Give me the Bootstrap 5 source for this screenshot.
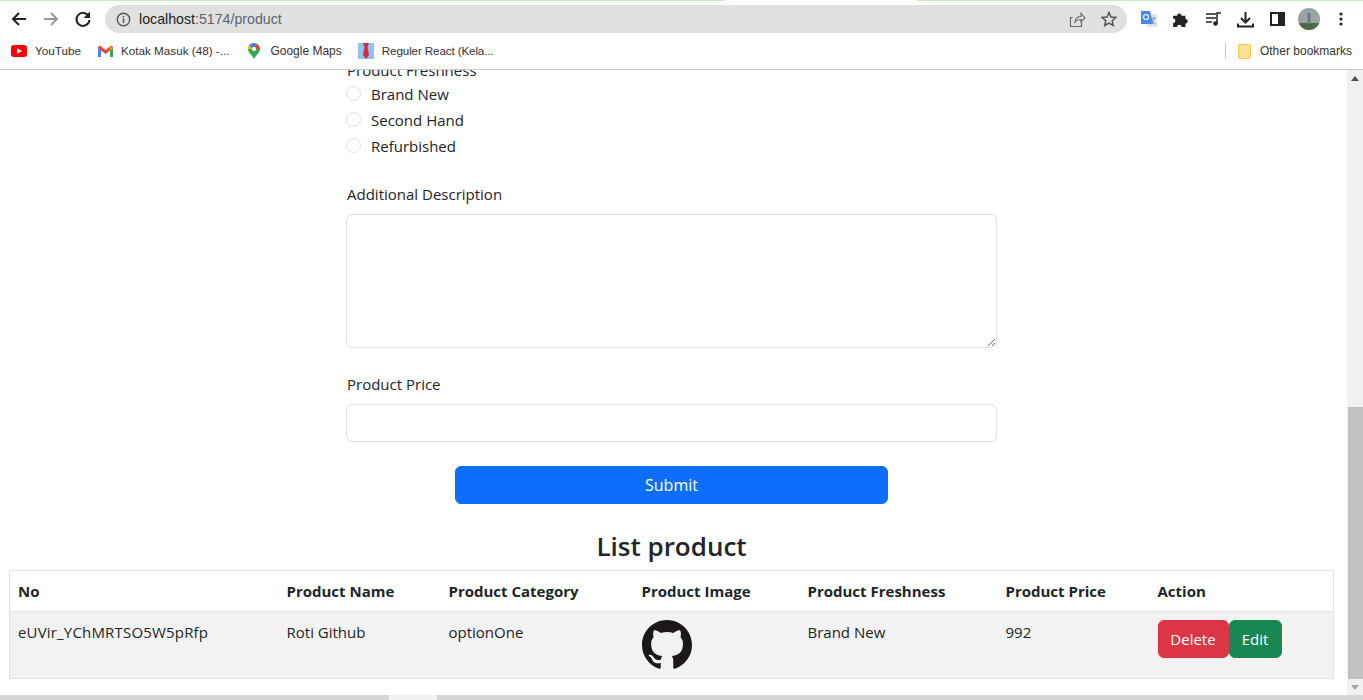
<!DOCTYPE html>
<html lang="en">
<head>
  <meta charset="UTF-8">
  <title>Product</title>
  <link href="https://cdn.jsdelivr.net/npm/bootstrap@5.3.3/dist/css/bootstrap.min.css" rel="stylesheet">
  <style>
    html, body {
      height: 700px;
      overflow: hidden;
    }
    body {
      font-family: "Open Sans", "Noto Sans", sans-serif;
      font-size: 15px;
      line-height: 24px;
      color: #212529;
    }
    /* browser chrome */
    .load-strip { height: 5px; }
    .load-strip div { height: 1px; background: #c8eec0; }
    .load-left { width: 725px; }
    .load-gap { width: 193px; background: #fff !important; }
    .chrome-bar {
      height: 28px;
      padding-left: 10px;
    }
    .nav-ico { width: 18px; height: 18px; }
    .back-ico { margin-right: 14px; }
    .fwd-ico { margin-right: 14px; }
    .url-box {
      width: 1022px;
      height: 28px;
      margin-left: 13px;
      background: #e0e0e0;
      border-radius: 14px;
      padding: 0 10px 0 11px;
      color: #5f6368;
      font-family: "Liberation Sans", sans-serif;
      font-size: 14.2px;
    }
    .url-host { color: #222; }
    .url-text { margin-left: 8px; }
    .share-ico { margin-right: 15px; }
    .ext-icons { margin-left: 6px; }
    .ext-slot { width: 32px; }
    .book-bar {
      height: 37px;
      padding: 0 11px 0 11px;
      border-bottom: 1px solid #c9c9c9;
      font-family: "Liberation Sans", sans-serif;
      font-size: 11.7px;
      color: #333;
    }
    .book-item { gap: 8px; margin-right: 17px; }
    .book-maps { gap: 9px; margin-left: 1px; margin-right: 16px; font-size: 12px; }
    .book-last { margin-right: 0; }
    .book-tight { letter-spacing: -.15px; }
    .book-other { gap: 9px; font-size: 12px; margin-right: 0; }
    .book-sep { width: 1px; height: 16px; background: #c4c4c4; margin-right: 12px; }

    /* page */
    .page-area { height: 625px; }
    .page-main {
      width: 1347px;
      padding: 0 13px 0 9px;
      overflow: hidden;
    }
    .form-wrap { width: 651px; margin: -12px auto 0; }
    .form-wrap .form-label, .form-wrap .form-check-label { padding-left: 1px; }
    .form-wrap .form-check { margin-bottom: 2px; padding-left: 24px; min-height: 24px; }
    .form-wrap .form-check-input { margin-left: -24px; margin-top: 4px; }
    .form-control { border-color: #dee2e6; height: 38px; }
    textarea.form-control { height: 134px; }
    .gap-desc { margin-top: 24px; }
    .gap-price { margin-top: 24px; }
    .btn-submit { width: 433px; margin: 24px auto 0; display: block; }
    .list-title {
      font-size: 26px;
      font-weight: 600;
      text-align: center;
      margin: 26px 0 7px;
      line-height: 33px;
    }
    .prod-table { margin-bottom: 0; font-size: 15px; table-layout: fixed; }
    .prod-table th { font-weight: 700; height: 41px; }
    .prod-table td { height: 66px; }
    .prod-table .id-cell { letter-spacing: .18px; }
    .w-no { width: 269px; }
    .w-name { width: 162px; }
    .w-cat { width: 193px; }
    .w-img { width: 166px; }
    .w-fresh { width: 198px; }
    .w-price { width: 152px; }
    .git-img { width: 50px; height: 50px; display: block; }
    .act-btn { font-size: 15px; border-radius: 6px; height: 38px; }
    .act-btn-del { width: 71px; padding: 0; }
    .act-btn-edit { width: 53px; padding: 0; }

    /* scrollbars */
    .vbar { width: 16px; background: #f1f1f1; }
    .vbar-arrow { height: 17px; }
    .vbar-arrow-low { height: 16px; }
    .vbar-space { height: 320px; }
    .vbar-thumb { width: 15px; margin-left: 1px; height: 272px; background: #c1c1c1; }
    .hbar { height: 5px; }
    .hbar-track { background: #d6d6d6; }
    .hbar-left { width: 389px; }
    .hbar-gap { width: 48px; background: #f1f1f1; }
  </style>
</head>
<body>
  <div class="load-strip d-flex">
    <div class="load-left"></div>
    <div class="load-gap"></div>
    <div class="flex-grow-1"></div>
  </div>

  <div class="chrome-bar d-flex align-items-center">
    <svg class="nav-ico back-ico" viewBox="0 0 18 18"><path d="M16 9H3.5M9 3 3 9l6 6" fill="none" stroke="#222" stroke-width="2"/></svg>
    <svg class="nav-ico fwd-ico" viewBox="0 0 18 18"><path d="M2 9h12.5M9 3l6 6-6 6" fill="none" stroke="#999" stroke-width="2"/></svg>
    <svg class="nav-ico" viewBox="0 0 18 18"><path d="M14.6 6A6.5 6.5 0 1 0 15.5 10" fill="none" stroke="#222" stroke-width="2"/><path d="M16 1.5V8H9.5z" fill="#222"/></svg>
    <div class="url-box d-flex align-items-center">
      <svg width="15" height="15" viewBox="0 0 15 15"><circle cx="7.5" cy="7.5" r="6.2" fill="none" stroke="#555" stroke-width="1.4"/><path d="M7.5 6.5v4.5M7.5 4v1.6" stroke="#555" stroke-width="1.5"/></svg>
      <span class="url-text flex-grow-1"><span class="url-host">localhost</span>:5174/product</span>
      <svg class="share-ico" width="17" height="17" viewBox="0 0 17 17"><path d="M3.5 6.500H1.500v9h11v-4M6 11c.5-3.500 3-5.500 6-5.500V2.500l4 4.500-4 4V8.500c-2.500 0-4.500.8-6 2.500z" fill="none" stroke="#666" stroke-width="1.100"/></svg>
      <svg width="16" height="16" viewBox="0 0 16 16"><path d="m8 1.500 2 4.500 4.900.5-3.700 3.200 1.100 4.800L8 12l-4.300 2.500 1.100-4.800L1.100 6.500 6 6z" fill="none" stroke="#555" stroke-width="1.500"/></svg>
    </div>
    <div class="ext-icons d-flex align-items-center">
      <div class="ext-slot d-flex justify-content-center">
        <svg width="18" height="18" viewBox="0 0 18 18"><rect x="7" y="4" width="10" height="13" fill="#dfe3e6"/><path d="M11 8h5M13.500 8c0 3-1.500 5-3 6M11.500 10c.8 2 2.500 3.500 4 4" fill="none" stroke="#5f8fd8"/><path d="M1 1h9l3 13H1z" fill="#4a86e8"/><circle cx="6" cy="7" r="2.500" fill="none" stroke="#fff" stroke-width="1.200"/></svg>
      </div>
      <div class="ext-slot d-flex justify-content-center">
        <svg width="18" height="18" viewBox="0 0 16 16"><path d="M1 5h3.500a2 2 0 1 1 4 0H12v3a2 2 0 1 1 0 4v3H8.500a2 2 0 1 0-4 0H1v-3.500a2 2 0 1 0 0-4z" fill="#222"/></svg>
      </div>
      <div class="ext-slot d-flex justify-content-center">
        <svg width="17" height="16" viewBox="0 0 17 16"><path d="M1 3h10M1 7h10M1 11h6" stroke="#222" stroke-width="1.500"/><path d="M12 12V2h4" fill="none" stroke="#222" stroke-width="1.500"/><circle cx="10.500" cy="12.500" r="2.300" fill="#222"/></svg>
      </div>
      <div class="ext-slot d-flex justify-content-center">
        <svg width="17" height="17" viewBox="0 0 17 17"><path d="M8.500 1v10M4 7l4.500 4.500L13 7M1 12.500v3h15v-3" fill="none" stroke="#222" stroke-width="2"/></svg>
      </div>
      <div class="ext-slot d-flex justify-content-center">
        <svg width="15" height="14" viewBox="0 0 15 14"><rect x="1" y="1" width="13" height="12" fill="none" stroke="#222" stroke-width="2"/><rect x="8" y="1" width="6" height="12" fill="#222"/></svg>
      </div>
      <div class="ext-slot d-flex justify-content-center">
        <svg width="22" height="22" viewBox="0 0 22 22"><defs><clipPath id="avatarClip"><circle cx="11" cy="11" r="11"/></clipPath></defs><g clip-path="url(#avatarClip)"><rect width="22" height="22" fill="#9aa3a8"/><rect y="15" width="22" height="7" fill="#4f6b45"/><rect x="9.500" y="5" width="3" height="11" fill="#6f7a80"/></g></svg>
      </div>
      <div class="ext-slot d-flex justify-content-center">
        <svg width="4" height="14" viewBox="0 0 4 14"><circle cx="2" cy="2" r="1.600" fill="#222"/><circle cx="2" cy="7" r="1.600" fill="#222"/><circle cx="2" cy="12" r="1.600" fill="#222"/></svg>
      </div>
    </div>
  </div>

  <div class="book-bar d-flex align-items-center">
    <div class="book-item d-flex align-items-center">
      <svg width="16" height="12" viewBox="0 0 16 12"><rect width="16" height="12" rx="3" fill="#f00"/><path d="m6.200 3.200 5 2.800-5 2.800z" fill="#fff"/></svg>
      <span>YouTube</span>
    </div>
    <div class="book-item d-flex align-items-center">
      <svg width="15" height="11" viewBox="0 0 15 11"><path d="M0 2v9h3V4z" fill="#4285f4"/><path d="M12 4v7h3V2z" fill="#34a853"/><path d="M0 2c0-2 2-2.500 3-1.500L7.500 4 12 .5c1-1 3-.5 3 1.500l-7.500 6z" fill="#ea4335"/><path d="M12 .5 15 2l-3 2z" fill="#fbbc04"/></svg>
      <span>Kotak Masuk (48) -...</span>
    </div>
    <div class="book-item book-maps d-flex align-items-center">
      <svg width="14" height="16" viewBox="0 0 14 16"><path d="M7 16C5 12 1 9.500 1 6a6 6 0 0 1 12 0c0 3.500-4 6-6 10z" fill="#34a853"/><path d="M2 2.500 7 6 1 6a6 6 0 0 1 1-3.500z" fill="#fbbc04"/><path d="M2 2.500A6 6 0 0 1 7 0l3 3-3 3z" fill="#4285f4"/><path d="M10 1a6 6 0 0 1 3 5H7z" fill="#ea4335"/><circle cx="7" cy="6" r="2.100" fill="#fff"/></svg>
      <span>Google Maps</span>
    </div>
    <div class="book-item book-last d-flex align-items-center flex-grow-1">
      <svg width="16" height="16" viewBox="0 0 16 16"><rect width="16" height="16" fill="#8fc2ef"/><path d="M5 0h6L9.500 4 11 12l-3 4-3-4 1.500-8z" fill="#d8283a"/></svg>
      <span class="book-tight">Reguler React (Kela...</span>
    </div>
    <div class="book-sep"></div>
    <div class="book-item book-other d-flex align-items-center">
      <svg width="13" height="15" viewBox="0 0 13 15"><rect x=".5" y=".5" width="12" height="14" rx="1" fill="#fde293" stroke="#f2c94c"/></svg>
      <span>Other bookmarks</span>
    </div>
  </div>

  <div class="page-area d-flex">
    <main class="page-main">
      <form class="form-wrap">
        <label class="form-label mb-0">Product Freshness</label>
        <div class="form-check">
          <input class="form-check-input" type="radio" name="fresh" id="r1">
          <label class="form-check-label" for="r1">Brand New</label>
        </div>
        <div class="form-check">
          <input class="form-check-input" type="radio" name="fresh" id="r2">
          <label class="form-check-label" for="r2">Second Hand</label>
        </div>
        <div class="form-check">
          <input class="form-check-input" type="radio" name="fresh" id="r3">
          <label class="form-check-label" for="r3">Refurbished</label>
        </div>
        <div class="gap-desc">
          <label class="form-label" for="desc">Additional Description</label>
          <textarea class="form-control" id="desc"></textarea>
        </div>
        <div class="gap-price">
          <label class="form-label" for="price">Product Price</label>
          <input class="form-control" id="price" type="text">
        </div>
        <button class="btn btn-primary btn-submit" type="button">Submit</button>
      </form>
      <h3 class="list-title">List product</h3>
      <table class="table table-striped border prod-table">
        <thead>
          <tr>
            <th class="w-no">No</th>
            <th class="w-name">Product Name</th>
            <th class="w-cat">Product Category</th>
            <th class="w-img">Product Image</th>
            <th class="w-fresh">Product Freshness</th>
            <th class="w-price">Product Price</th>
            <th>Action</th>
          </tr>
        </thead>
        <tbody>
          <tr>
            <td class="id-cell">eUVir_YChMRTSO5W5pRfp</td>
            <td>Roti Github</td>
            <td>optionOne</td>
            <td>
              <svg class="git-img" viewBox="0 0 16 16"><path fill="#1b1817" d="M8 0C3.580 0 0 3.580 0 8c0 3.540 2.290 6.530 5.470 7.590.4.070.55-.17.55-.38 0-.19-.01-.82-.01-1.490-2.010.37-2.530-.49-2.690-.94-.09-.23-.48-.94-.82-1.130-.28-.15-.68-.52-.01-.53.63-.01 1.080.58 1.230.82.72 1.210 1.870.87 2.330.66.07-.52.28-.87.51-1.070-1.780-.2-3.640-.89-3.640-3.950 0-.87.31-1.590.82-2.150-.08-.2-.36-1.020.08-2.120 0 0 .67-.21 2.200.82.64-.18 1.320-.27 2-.27.68 0 1.360.09 2 .27 1.530-1.040 2.200-.82 2.200-.82.44 1.100.16 1.920.08 2.120.51.56.82 1.270.82 2.150 0 3.070-1.870 3.750-3.650 3.950.29.25.54.73.54 1.480 0 1.070-.01 1.930-.01 2.200 0 .21.15.46.55.38A8.013 8.013 0 0 0 16 8c0-4.420-3.580-8-8-8z"/></svg>
            </td>
            <td>Brand New</td>
            <td>992</td>
            <td class="text-nowrap">
              <button class="btn btn-danger act-btn act-btn-del" type="button">Delete</button><button class="btn btn-success act-btn act-btn-edit" type="button">Edit</button>
            </td>
          </tr>
        </tbody>
      </table>
    </main>
    <div class="vbar d-flex flex-column">
      <div class="vbar-arrow d-flex align-items-center justify-content-center">
        <svg width="8" height="5" viewBox="0 0 8 5"><path d="M4 0 8 5H0z" fill="#505050"/></svg>
      </div>
      <div class="vbar-space"></div>
      <div class="vbar-thumb"></div>
      <div class="vbar-arrow-low d-flex align-items-center justify-content-center">
        <svg width="8" height="5" viewBox="0 0 8 5"><path d="M4 5 8 0H0z" fill="#a3a3a3"/></svg>
      </div>
    </div>
  </div>
  <div class="hbar d-flex">
    <div class="hbar-track hbar-left"></div>
    <div class="hbar-gap"></div>
    <div class="hbar-track flex-grow-1"></div>
  </div>
  <script src="https://cdn.jsdelivr.net/npm/bootstrap@5.3.3/dist/js/bootstrap.bundle.min.js"></script>
</body>
</html>
